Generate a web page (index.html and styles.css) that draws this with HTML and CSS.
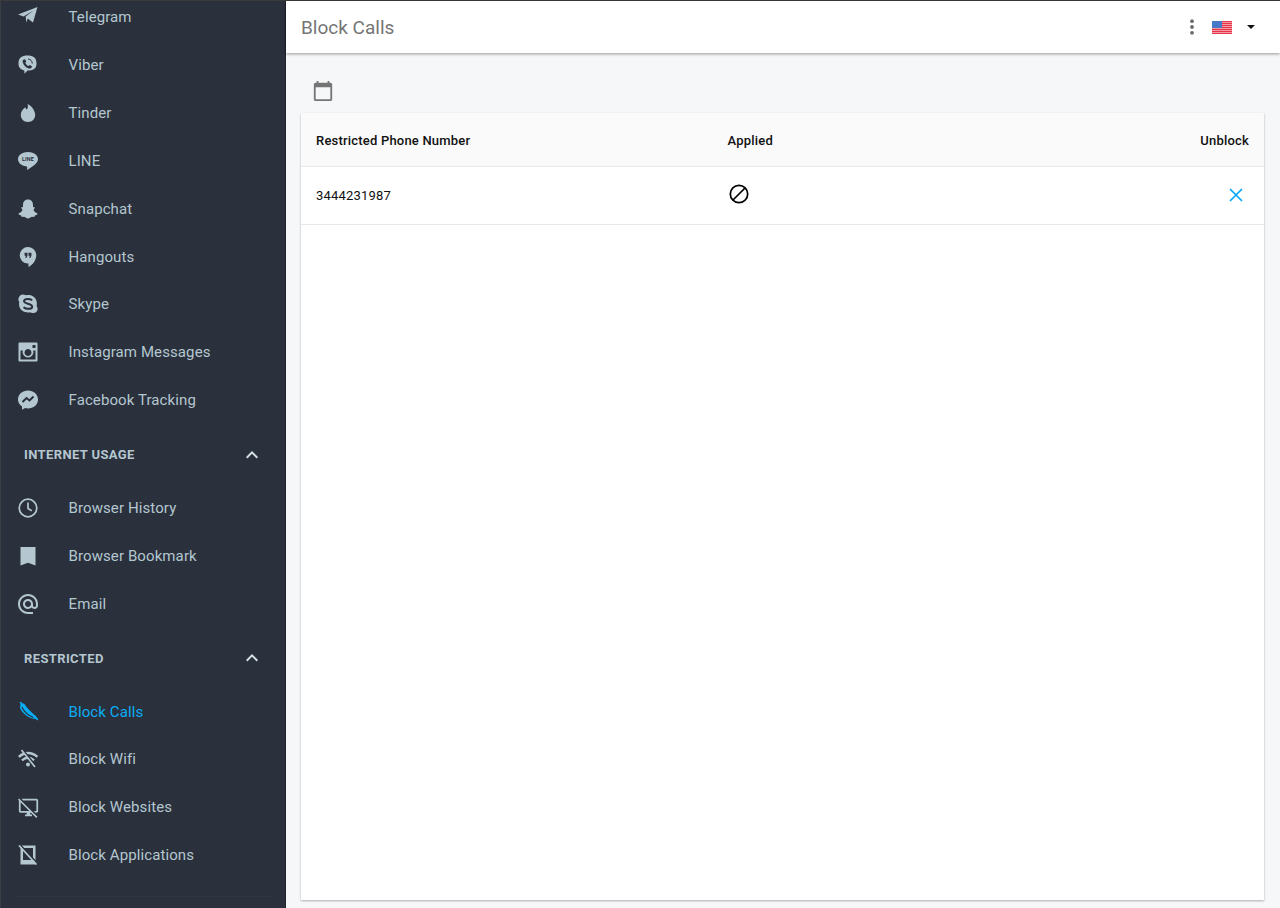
FILE: index.html
```html
<!DOCTYPE html>
<html lang="en">
<head>
<meta charset="utf-8">
<title>Block Calls</title>
<link rel="stylesheet" href="styles.css">
</head>
<body>
<div class="app">
<aside class="sidebar">
<nav class="nav">
<a class="item first"><svg class="ico" viewBox="0 0 20 20"><path class="f" d="M0 7.500 19.500 0 15 15.500 9.700 11.500 8.500 15.500 7.600 9.500 15.500 3.500 5.500 9.500Z"/></svg><span>Telegram</span></a>
<a class="item"><svg class="ico" viewBox="0 0 20 20"><path class="f" d="M9.500 0.500C15 0.500 18.500 2.500 18.500 8.500C18.500 14 15 15.500 9.500 15.500L6.500 18.800L6.300 15.400C2.500 14.500 0.500 12.500 0.500 8.500C0.500 2.500 4 0.500 9.500 0.500Z"/><path class="d" d="M5.300 4.800L7 4.200L8.300 6.500L7.300 7.700C7.900 9.200 9 10.300 10.500 11L11.700 10L14 11.300L13.300 13C12.500 13.800 11.200 13.700 10 13.200C7.500 12.100 5.800 10.200 4.900 7.800C4.500 6.500 4.500 5.500 5.300 4.800Z"/><path class="line" d="M10 4C12.500 4.200 14 5.700 14.300 8.500"/></svg><span>Viber</span></a>
<a class="item"><svg class="ico" viewBox="0 0 20 20"><path class="f" d="M9.500 1C10.500 3.500 9.800 5.300 8.700 6.500C8 6 7.500 5.200 7.300 4.300C5 6 2.800 8.500 2.800 12C2.800 16.200 6 19 10 19C14 19 17.200 16.200 17.200 12C17.200 7.500 13.500 2.800 9.500 1Z"/></svg><span>Tinder</span></a>
<a class="item"><svg class="ico" viewBox="0 0 20 20"><path class="f" d="M10 1C15.500 1 20 3.900 20 8C20 12 15 15.500 9 19C9.500 16.500 9.300 15.500 8 15.300C3.500 14.800 0 12 0 8C0 3.900 4.500 1 10 1Z"/><text class="tiny" x="10" y="10">LINE</text></svg><span>LINE</span></a>
<a class="item"><svg class="ico" viewBox="0 0 20 20"><path class="f" d="M10 0.500C13.500 0.500 15 3 15 6V8L17 8.500L15.500 11C16 12.500 17.500 13.800 19.500 14.500L19 15.800L16.800 16.500L16.300 18L13.800 17.800C12.500 18.500 11.500 19.500 10 19.500C8.500 19.500 7.500 18.500 6.200 17.800L3.700 18L3.200 16.500L1 15.800L0.500 14.500C2.500 13.800 4 12.500 4.500 11L3 8.500L5 8V6C5 3 6.500 0.500 10 0.500Z"/></svg><span>Snapchat</span></a>
<a class="item"><svg class="ico" viewBox="2.500 2 18 20.500"><path class="f" d="M15 11L14 13H12.500L13.500 11H12V8H15M11 11L10 13H8.500L9.500 11H8V8H11M11.500 2A8.500 8.500 0 0 0 3 10.500A8.500 8.500 0 0 0 11.500 19H12V22.500C16.860 20.150 20 15 20 10.500C20 5.800 16.190 2 11.500 2Z" fill-rule="evenodd"/></svg><span>Hangouts</span></a>
<a class="item"><svg class="ico" viewBox="0 0 20 20"><path class="f" d="M5 0.500C6 0.500 7 0.900 7.800 1.300C12 0.300 17 2 18.500 7C19 9 18.800 10.800 18.700 12.200C19.500 13.500 19.800 14.500 19.500 15.800C19 18.200 16.800 19.500 14.500 19C13.500 18.900 12.800 18.500 12.200 18.200C8 19 3 17.500 1.500 13C0.900 10.800 1 9 1.300 7.800C0.500 6.800 0.200 5.800 0.500 4.500C1 2 3 0.500 5 0.500Z"/><path class="line thick" d="M14 6.500C13 4.500 6.500 4.200 6 7C5.500 10 14.500 9.500 14.200 12.800C14 15.500 7 15.500 5.800 13"/></svg><span>Skype</span></a>
<a class="item"><svg class="ico" viewBox="0 0 20 20"><path class="f" fill-rule="evenodd" d="M1.500 0.500H18.500A1 1 0 0 1 19.500 1.500V18.500A1 1 0 0 1 18.500 19.500H1.500A1 1 0 0 1 0.500 18.500V1.500A1 1 0 0 1 1.500 0.500ZM14.500 3V6H17.500V3ZM2.500 8.500V17.500H17.500V8.500H15.300A5.500 5.500 0 1 1 4.700 8.500ZM10 7A3.500 3.500 0 1 0 10.001 7Z"/></svg><span>Instagram Messages</span></a>
<a class="item"><svg class="ico" viewBox="0 0 20 20"><path class="f" d="M10 0.500C15.500 0.500 20 4.300 20 9.500C20 14.700 15.500 18.500 10 18.500C9 18.500 8 18.300 7.200 18.100L4 19.800V16.500C1.500 14.800 0 12.400 0 9.500C0 4.300 4.500 0.500 10 0.500Z"/><path class="line thick" d="M4.500 12L8.500 8L11.500 10.500L15.500 6.500"/></svg><span>Facebook Tracking</span></a>

<div class="section"><h2>INTERNET USAGE</h2><svg class="chev" viewBox="0 0 24 24"><path d="M12 8l-6 6 1.410 1.410L12 10.830l4.590 4.580L18 14z"/></svg></div>
<a class="item"><svg class="ico" viewBox="0 0 20 20"><circle class="ring" cx="10" cy="10" r="8.800"/><path class="ring" d="M10 4.500V10.500L13.800 12.800"/></svg><span>Browser History</span></a>
<a class="item"><svg class="ico" viewBox="0 0 20 20"><path class="f" d="M2.500 1H17.500V19.500L10 16.800L2.500 19.500Z"/></svg><span>Browser Bookmark</span></a>
<a class="item"><svg class="ico" viewBox="2 2 20 20"><path class="f" d="M12 2C6.480 2 2 6.480 2 12s4.480 10 10 10h5v-2h-5c-4.340 0-8-3.660-8-8s3.660-8 8-8 8 3.660 8 8v1.430c0 .79-.71 1.570-1.500 1.570s-1.500-.78-1.500-1.570V12c0-2.760-2.240-5-5-5s-5 2.240-5 5 2.240 5 5 5c1.380 0 2.640-.56 3.540-1.470.65.89 1.770 1.470 2.960 1.470 1.970 0 3.500-1.600 3.500-3.570V12c0-5.520-4.480-10-10-10zm0 13c-1.660 0-3-1.340-3-3s1.340-3 3-3 3 1.340 3 3-1.340 3-3 3z"/></svg><span>Email</span></a>

<div class="section"><h2>RESTRICTED</h2><svg class="chev" viewBox="0 0 24 24"><path d="M12 8l-6 6 1.410 1.410L12 10.830l4.590 4.580L18 14z"/></svg></div>
<a class="item active"><svg class="ico" viewBox="0 0 20 20"><path class="f" d="M2.500 2L6 1.500L8.500 5C10.500 9 14 12 18 14L19 17C12 17.500 4 11.500 2 6Z"/><path class="gap thin" d="M3.800 5C6 9.500 10 13.500 15.500 15.500"/><path class="ring" d="M2 0L20 18"/></svg><span>Block Calls</span></a>
<a class="item"><svg class="ico" viewBox="0 0 20 20"><path class="ring bold" d="M0.800 7.800C4 5 7 4 10 4C13 4 16.500 5.200 19.500 7.800"/><path class="ring bold" d="M4 11.300C6 9.500 8 8.700 10 8.700C12 8.700 14 9.500 16 11.300"/><circle class="f" cx="10" cy="15.500" r="2"/><path class="gap" d="M4.700 0.500L18 17"/><path class="ring" d="M3.500 1L17 18"/></svg><span>Block Wifi</span></a>
<a class="item"><svg class="ico wide" viewBox="0 0 24 24"><path class="f" d="M23 16c0 1.100-.9 2-2 2h-1l-2-2h3V4H6L4 2h17c1.100 0 2 .9 2 2v12zm-8.100 2l6 6 1.300-1.300-4.700-4.700-2-2L1.200 1.800 0 3.100l1 1V16c0 1.100.9 2 2 2h7v2H8v2h8v-2h-2v-2h.9zM3 16V6.100l9.900 9.900H3z"/></svg><span>Block Websites</span></a>
<a class="item"><svg class="ico" viewBox="0 0 20 20"><path class="f" fill-rule="evenodd" d="M2.500 0.500H17.500V19.500H2.500ZM5 3V15H15V3Z"/><path class="gap" d="M2 -0.500L20 19"/><path class="ring" d="M1 0.500L18.500 19.500"/></svg><span>Block Applications</span></a>
<div class="rule"></div>
</nav>
</aside>
<div class="main">
<header class="topbar">
<h1>Block Calls</h1>
<div class="tools">
<svg class="kebab" viewBox="0 0 4 16"><circle cx="2" cy="2.200" r="1.900"/><circle cx="2" cy="8" r="1.900"/><circle cx="2" cy="13.800" r="1.900"/></svg>
<svg class="flag" viewBox="0 0 20 13"><rect width="20" height="13" fill="#fff"/><path d="M0 0.500H20M0 2.500H20M0 4.500H20M0 6.500H20M0 8.500H20M0 10.500H20M0 12.500H20" stroke="#e8344a" stroke-width="1.400"/><rect width="10" height="7" fill="#4a78c8"/></svg>
<svg class="caret" viewBox="0 0 8 4"><path d="M0 0H8L4 4Z"/></svg>
</div>
</header>
<div class="content">
<svg class="cal" viewBox="0 0 24 24"><path d="M20 3h-1V1h-2v2H7V1H5v2H4c-1.100 0-2 .9-2 2v16c0 1.100.9 2 2 2h16c1.100 0 2-.9 2-2V5c0-1.100-.9-2-2-2zm0 18H4V8h16v13z"/></svg>
<section class="card">
<div class="row head"><span class="c1">Restricted Phone Number</span><span class="c2">Applied</span><span class="c3">Unblock</span></div>
<div class="row body-row"><span class="c1">3444231987</span><span class="c2"><svg class="ban" viewBox="0 0 20 20"><circle cx="10" cy="10" r="8.700"/><path d="M4 16L16 4"/></svg></span><span class="c3"><svg class="close" viewBox="0 0 14 14"><path d="M1 1L13 13M13 1L1 13"/></svg></span></div>
</section>
</div>
</div>
</div>
</body>
</html>
```
FILE: styles.css
```css
* { box-sizing: border-box; }
html, body { margin: 0; height: 100%; overflow: hidden; }
body { font-family: Roboto, "Liberation Sans", sans-serif; background: #f6f7f9; }
.app { display: flex; height: 908px; border-top: 1px solid #3a3a3a; }
.sidebar { width: 286px; flex: none; background: #2a303c; border-left: 1px solid #3a3d42; border-right: 1px solid #1f232c; overflow: hidden; }
.nav { display: flex; flex-direction: column; }
.item { display: flex; align-items: center; height: 47.85px; padding-left: 17px; color: #b4c7d0; font-size: 15px; letter-spacing: 0.1px; }
.item.first { margin-top: -7.5px; }
.item span { margin-left: 30.5px; }
.item.active { color: #0aadf5; --ic: #0aadf5; }
.ico { width: 20px; height: 20px; flex: none; --c: var(--ic, #b4c7d0); }
.ico.wide { width: 21px; height: 21px; margin-right: -1px; }
.f { fill: var(--c); }
.d { fill: #2a303c; }
.ring { fill: none; stroke: var(--c); stroke-width: 1.7; }
.ring.bold { stroke-width: 2.4; }
.gap { fill: none; stroke: #2a303c; stroke-width: 1.6; }
.gap.thin { stroke-width: 1.2; }
.line { fill: none; stroke: #2a303c; stroke-width: 1; }
.line.thick { stroke-width: 2; }
.tiny { fill: #2a303c; font: 700 5.5px Roboto, sans-serif; text-anchor: middle; }
.section { display: flex; align-items: center; justify-content: space-between; height: 60px; padding: 1px 21px 0 23px; }
.section h2 { margin: 0; font-size: 13px; font-weight: 700; color: #b4c7d0; letter-spacing: 0.38px; }
.chev { width: 24px; height: 24px; fill: #d5e0e5; }
.rule { height: 1px; margin: 17px 15px 0; background: #303642; }
.main { flex: 1; min-width: 0; display: flex; flex-direction: column; }
.topbar { flex: none; height: 52px; background: #fff; display: flex; align-items: center; justify-content: space-between; padding: 0 25px 0 15px; box-shadow: 0 1px 3px rgba(0,0,0,.4); position: relative; }
.topbar h1 { margin: 0; font-size: 19px; font-weight: 400; color: #757575; }
.tools { display: flex; align-items: center; }
.kebab { width: 4px; height: 16px; fill: #6b6b6b; margin-right: 18px; }
.flag { width: 20px; height: 13px; margin: 1px 15px 0 0; }
.caret { width: 8px; height: 4px; fill: #111; }
.content { flex: 1; min-height: 0; display: flex; flex-direction: column; padding: 27px 16px 8px 15px; }
.cal { width: 22px; height: 22px; margin: 0 0 11px 11px; fill: #757575; flex: none; }
.card { flex: 1; background: #fff; box-shadow: 0 1px 2px rgba(0,0,0,.3); }
.row { display: flex; align-items: center; padding: 0 15px; font-size: 13px; color: #111; border-bottom: 1px solid #e8e8e8; letter-spacing: 0.2px; }
.head { height: 54px; padding-top: 2px; background: #fafafa; font-weight: 500; }
.body-row { height: 58px; }
.c1 { width: 411.5px; }
.c2 { flex: 1; display: flex; }
.c3 { display: flex; }
.ban { width: 20px; height: 20px; margin: -4px 0 0 1px; fill: none; stroke: #000; stroke-width: 1.7; }
.close { width: 14px; height: 14px; fill: none; stroke: #03a9f4; stroke-width: 1.7; margin: -1px 6px 0 0; }
```
